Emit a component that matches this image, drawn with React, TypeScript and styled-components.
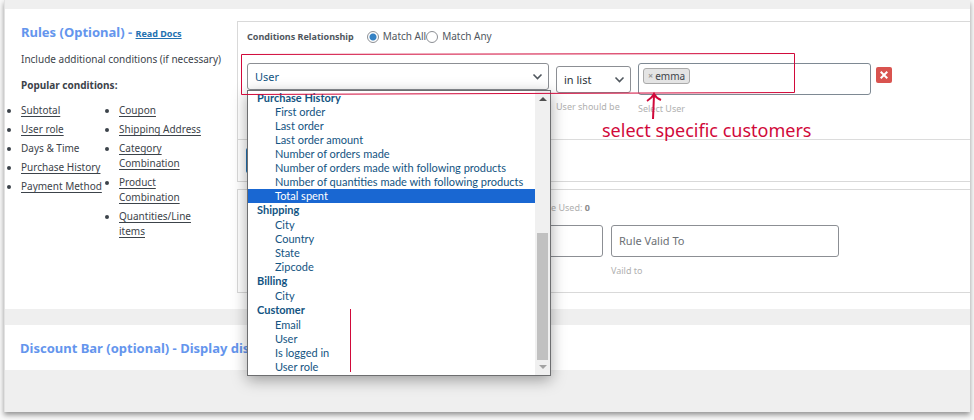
import React from "react";
import styled, { createGlobalStyle, css } from "styled-components";

const GlobalStyle = createGlobalStyle`
  *, *::before, *::after { box-sizing: border-box; }
  body {
    margin: 0;
    background: #f8f8f8;
    color: #3c434a;
    font: 10px/15px "Noto Sans", "Open Sans", sans-serif;
  }
  h2, p, ul { margin: 0; padding: 0; }
  button, input, select { font: inherit; color: inherit; margin: 0; }
`;

const Frame = styled.main`
  position: relative;
  margin: 0 4px 8px;
  padding: 9px 0 42px;
  background: #efefef;
  border: solid #e2e2e2;
  border-width: 0 0 0 1px;
  box-shadow: 0 3px 5px rgba(0, 0, 0, 0.4);
`;

const Panel = styled.section`
  display: flex;
  background: #fff;
  padding: 12px 0 16px 16px;
`;

const Sidebar = styled.aside`
  flex: 0 0 216px;
  display: flex;
  flex-direction: column;
  padding-top: 1px;
`;

const Heading = styled.h2`
  font-size: 13px;
  line-height: 20px;
  font-weight: 700;
  color: #6495ed;
  white-space: nowrap;
`;

const DocsLink = styled.a`
  font-size: 9px;
  color: #2271b1;
`;

const Intro = styled.p`
  margin-top: 8px;
  white-space: nowrap;
`;

const Popular = styled.p`
  margin-top: 11px;
  font-weight: 700;
`;

const Lists = styled.div`
  display: flex;
  margin-top: 10px;
`;

const BulletList = styled.ul`
  flex: 0 0 98px;
  display: flex;
  flex-direction: column;
  gap: 4px;
`;

const Bullet = styled.li<{ $wrap?: boolean }>`
  white-space: ${(p) => (p.$wrap ? "normal" : "nowrap")};
  padding-right: ${(p) => (p.$wrap ? "8px" : "0")};
`;

const TextLink = styled.a`
  color: inherit;
  text-decoration: underline;
  text-underline-offset: 2px;
`;

const Cards = styled.div`
  flex: 1;
  min-width: 0;
  display: flex;
  flex-direction: column;
  gap: 7px;
`;

const Card = styled.div`
  border: 1px solid #d9d9d9;
  border-right: 0;
`;

const Relationship = styled.div`
  display: flex;
  align-items: center;
  padding: 7px 9px 0;
  color: #50575e;
`;

const RelationLabel = styled.span`
  font-size: 9px;
  font-weight: 700;
  margin-right: 13px;
`;

const RadioLabel = styled.label`
  display: flex;
  align-items: center;
  gap: 4px;
  white-space: nowrap;
`;

const Radio = styled.input`
  appearance: none;
  width: 12px;
  height: 12px;
  border: 1px solid #8c8f94;
  border-radius: 50%;
  background: #fff;
  &:checked {
    background: radial-gradient(circle, #3582c4 3px, #fff 4px);
  }
`;

const ConditionRow = styled.div`
  display: grid;
  grid-template-columns: 302fr 75px 233fr 16px;
  gap: 7px;
  align-items: start;
  padding: 19px 76px 23px 9px;
  border-bottom: 1px solid #dcdcdc;
`;

const Field = styled.div<{ $drop?: boolean }>`
  position: relative;
  padding-top: ${(p) => (p.$drop ? "3px" : "0")};
`;

const SelectBox = styled.div`
  position: relative;
  display: flex;
  align-items: center;
`;

const Select = styled.select<{ $accent?: boolean }>`
  appearance: none;
  width: 100%;
  height: 27px;
  padding: 0 7px 1px;
  border: 1px solid #8c8f94;
  border-radius: 3px;
  background: #fff;
  color: ${(p) => (p.$accent ? "#135482" : "#2c3338")};
  font-size: 11px;
`;

const Chevron = styled.svg`
  position: absolute;
  right: 6px;
  width: 11px;
  height: 8px;
  pointer-events: none;
`;

const Hint = styled.p`
  margin-top: 6px;
  font-size: 9px;
  color: #b0b0b0;
  white-space: nowrap;
`;

const TagBox = styled.div`
  height: 32px;
  padding: 4px;
  border: 1px solid #7e8993;
  border-radius: 3px;
  background: #fff;
`;

const Tag = styled.button`
  display: flex;
  align-items: center;
  gap: 2px;
  height: 16px;
  padding: 0 4px;
  border: 1px solid #aaa;
  border-radius: 3px;
  background: #e4e4e4;
  line-height: 14px;
`;

const TagCross = styled.span`
  color: #999;
  font-size: 9px;
  font-weight: 700;
`;

const RemoveButton = styled.button`
  display: flex;
  align-items: center;
  justify-content: center;
  width: 16px;
  height: 16px;
  margin: 4px 0 0 -2px;
  padding: 0;
  border: 0;
  border-radius: 2px;
  background: #d9534f;
`;

const AddRow = styled.div`
  padding: 8px;
`;

const AddButton = styled.button`
  display: block;
  width: 84px;
  height: 25px;
  border: 0;
  border-radius: 2px;
  background: #2271b1;
`;

const Limits = styled.div`
  padding: 10px 131px 14px 9px;
`;

const Usage = styled.p`
  padding-left: 304px;
  font-size: 9px;
  color: #b0b0b0;
  b { color: #8c8c8c; }
`;

const LimitGrid = styled.div`
  display: grid;
  grid-template-columns: 120px 1fr 1fr;
  gap: 8px;
  margin-top: 10px;
`;

const TextInput = styled.input`
  display: block;
  width: 100%;
  height: 32px;
  padding: 0 7px 1px;
  border: 1px solid #8c8f94;
  border-radius: 3px;
  background: #fff;
  font-size: 11px;
  &::placeholder { color: #6c7075; opacity: 1; }
`;

const DiscountPanel = styled.section`
  margin-top: 16px;
  padding: 13px 15px 12px;
  background: #fff;
`;

const Menu = styled.div`
  position: absolute;
  z-index: 2;
  top: 27px;
  left: 0;
  right: -2px;
  display: flex;
  border: 1px solid #6d6e70;
  background: #fff;
  box-shadow: 0 4px 14px rgba(0, 0, 0, 0.35);
`;

const Options = styled.ul`
  flex: 1;
  min-width: 0;
  padding-bottom: 1px;
  list-style: none;
  font: 11px/13px Lato, "Noto Sans", sans-serif;
  color: #135482;
`;

const Option = styled.li<{ $kind: "group" | "item" | "active"; $first?: boolean }>`
  height: 14px;
  padding-left: 27px;
  white-space: nowrap;
  ${(p) =>
    p.$kind === "group" &&
    css`
      height: ${p.$first ? 14 : 15}px;
      padding-left: 9px;
      font-weight: 700;
    `}
  ${(p) =>
    p.$kind === "active" &&
    css`
      background: #1967d2;
      color: #fff;
    `}
`;

const ScrollTrack = styled.div`
  flex: 0 0 15px;
  display: flex;
  flex-direction: column;
  align-items: center;
  padding: 6px 0;
  background: #f0f0f0;
`;

const Thumb = styled.div`
  width: 11px;
  height: 127px;
  margin: auto 0 5px;
  background: #c1c1c1;
`;

const Arrow = styled.svg`
  width: 8px;
  height: 4px;
`;

const Marks = styled.svg`
  position: absolute;
  z-index: 3;
  top: 0;
  left: 0;
  width: 100%;
  height: 100%;
  pointer-events: none;
`;

const Callout = styled.span`
  position: absolute;
  z-index: 3;
  top: 118px;
  left: 597px;
  font-size: 18px;
  line-height: 24px;
  color: #d1093a;
  white-space: nowrap;
`;

const groups: [string, string[]][] = [
  [
    "Purchase History",
    [
      "First order",
      "Last order",
      "Last order amount",
      "Number of orders made",
      "Number of orders made with following products",
      "Number of quantities made with following products",
      "Total spent",
    ],
  ],
  ["Shipping", ["City", "Country", "State", "Zipcode"]],
  ["Billing", ["City"]],
  ["Customer", ["Email", "User", "Is logged in", "User role"]],
];

const DownIcon = () => (
  <Chevron viewBox="0 0 11 8" fill="none" stroke="#50575e" strokeWidth="1.6">
    <path d="M1.5 1.5 5.5 5.5 9.5 1.5" />
  </Chevron>
);

const ConditionMenu = () => (
  <Menu>
    <Options role="listbox" aria-label="Condition">
      {groups.map(([name, items], i) => (
        <React.Fragment key={name}>
          <Option $kind="group" $first={i === 0} role="presentation">
            {name}
          </Option>
          {items.map((item) => {
            const active = item === "Total spent";
            return (
              <Option key={item} $kind={active ? "active" : "item"} role="option" aria-selected={active}>
                {item}
              </Option>
            );
          })}
        </React.Fragment>
      ))}
    </Options>
    <ScrollTrack>
      <Arrow viewBox="0 0 8 4" fill="#505050">
        <path d="M0 4 4 0 8 4z" />
      </Arrow>
      <Thumb />
      <Arrow viewBox="0 0 8 4" fill="#a3a3a3">
        <path d="M0 0 4 4 8 0z" />
      </Arrow>
    </ScrollTrack>
  </Menu>
);

export default function App() {
  return (
    <>
      <GlobalStyle />
      <Frame>
        <Panel>
          <Sidebar>
            <Heading>
              Rules (Optional) - <DocsLink href="#docs">Read Docs</DocsLink>
            </Heading>
            <Intro>Include additional conditions (if necessary)</Intro>
            <Popular>Popular conditions:</Popular>
            <Lists>
              <BulletList>
                <Bullet><TextLink href="#subtotal">Subtotal</TextLink></Bullet>
                <Bullet><TextLink href="#role">User role</TextLink></Bullet>
                <Bullet>Days &amp; Time</Bullet>
                <Bullet><TextLink href="#history">Purchase History</TextLink></Bullet>
                <Bullet><TextLink href="#payment">Payment Method</TextLink></Bullet>
              </BulletList>
              <BulletList>
                {["Coupon", "Shipping Address", "Category Combination", "Product Combination", "Quantities/Line items"].map((t) => (
                  <Bullet key={t} $wrap>
                    <TextLink href="#condition">{t}</TextLink>
                  </Bullet>
                ))}
              </BulletList>
            </Lists>
          </Sidebar>
          <Cards>
            <Card>
              <Relationship role="radiogroup" aria-labelledby="relation">
                <RelationLabel id="relation">Conditions Relationship</RelationLabel>
                <RadioLabel>
                  <Radio type="radio" name="match" defaultChecked />
                  Match All
                </RadioLabel>
                <RadioLabel>
                  <Radio type="radio" name="match" />
                  Match Any
                </RadioLabel>
              </Relationship>
              <ConditionRow>
                <Field>
                  <SelectBox>
                    <Select $accent aria-label="Condition type">
                      <option>User</option>
                    </Select>
                    <DownIcon />
                  </SelectBox>
                  <ConditionMenu />
                </Field>
                <Field $drop>
                  <SelectBox>
                    <Select aria-label="User should be">
                      <option>in list</option>
                    </Select>
                    <DownIcon />
                  </SelectBox>
                  <Hint>User should be</Hint>
                </Field>
                <Field>
                  <TagBox>
                    <Tag type="button" aria-label="Remove emma">
                      <TagCross>×</TagCross>emma
                    </Tag>
                  </TagBox>
                  <Hint>Select User</Hint>
                </Field>
                <RemoveButton type="button" aria-label="Remove condition">
                  <svg width="8" height="8" viewBox="0 0 8 8" stroke="#fff" strokeWidth="2">
                    <path d="M.7.7 7.3 7.3M7.3.7.7 7.3" />
                  </svg>
                </RemoveButton>
              </ConditionRow>
              <AddRow>
                <AddButton type="button" aria-label="Add condition" />
              </AddRow>
            </Card>
            <Card>
              <Limits>
                <Usage>
                  e Used: <b>0</b>
                </Usage>
                <LimitGrid>
                  <TextInput aria-label="Usage limit" />
                  <TextInput aria-label="Rule Valid From" />
                  <div>
                    <TextInput aria-label="Rule Valid To" placeholder="Rule Valid To" />
                    <Hint>Vaild to</Hint>
                  </div>
                </LimitGrid>
              </Limits>
            </Card>
          </Cards>
        </Panel>
        <DiscountPanel>
          <Heading>Discount Bar (optional) - Display dis</Heading>
        </DiscountPanel>
        <Marks fill="none" stroke="#d1093a" aria-hidden="true">
          <path d="M236.5 54.5 789.5 53.5V92.5L236.5 94.5z" strokeWidth="1" />
          <path d="M345.5 309V372" strokeWidth="1" />
          <path d="M648 119 649 95M642 101Q647 98 649 94Q651 98 656 100" strokeWidth="2" />
        </Marks>
        <Callout>select specific customers</Callout>
      </Frame>
    </>
  );
}
